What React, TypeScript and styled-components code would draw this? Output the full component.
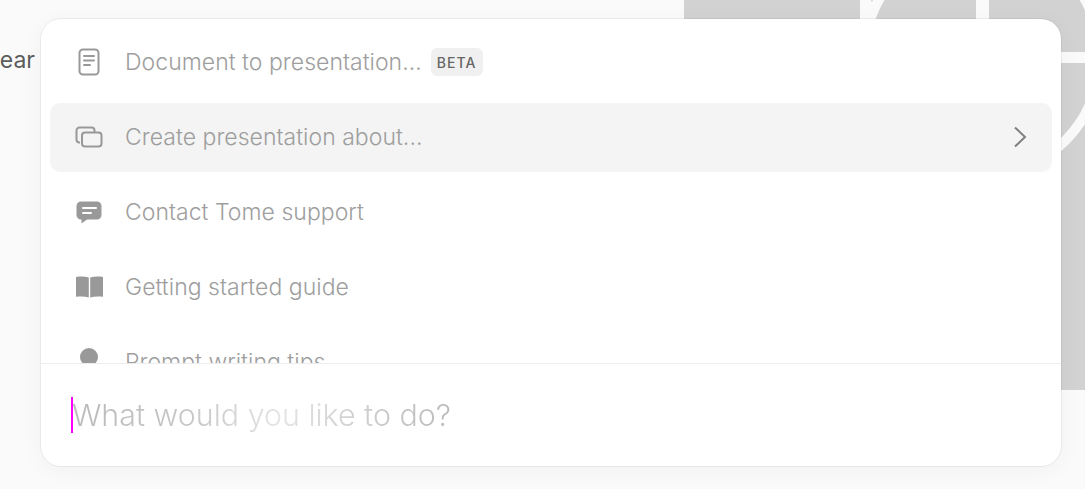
import React from "react";
import styled, { createGlobalStyle } from "styled-components";

const GlobalStyle = createGlobalStyle`
  html, body {
    margin: 0;
    padding: 0;
    height: 100%;
    background: #fafafa;
    overflow: hidden;
  }
  #root {
    height: 100%;
  }
`;

const Page = styled.div`
  width: 1085px;
  height: 489px;
  position: relative;
  overflow: hidden;
  display: flex;
  justify-content: space-between;
  align-items: flex-start;
  font-family: Inter, "Liberation Sans", sans-serif;
`;

const BackText = styled.span`
  margin: 46px 0 0 0;
  font-size: 23px;
  line-height: 28px;
  font-weight: 400;
  color: #5c5c5c;
  width: 35px;
  overflow: hidden;
  direction: rtl;
`;

const Artwork = styled.svg`
  display: block;
  width: 401px;
  height: 390px;
  background: #d2d2d2;
  flex: none;
`;

const Palette = styled.div`
  position: absolute;
  left: 41px;
  top: 19px;
  width: 1020px;
  height: 447px;
  box-sizing: border-box;
  display: flex;
  flex-direction: column;
  background: #fff;
  border-radius: 20px;
  box-shadow: 0 0 0 1px rgba(0, 0, 0, 0.05), 0 4px 24px rgba(0, 0, 0, 0.04);
  overflow: hidden;
`;

const List = styled.div`
  height: 344px;
  flex: none;
  padding: 9px 9px 0;
  box-sizing: border-box;
  display: flex;
  flex-direction: column;
  gap: 6px;
  overflow: hidden;
`;

const Row = styled.div<{ $active?: boolean }>`
  height: 69px;
  flex: none;
  display: flex;
  align-items: center;
  padding: 0 25px 0 24px;
  border-radius: 10px;
  background: ${(p) => (p.$active ? "#f4f4f4" : "transparent")};
`;

const IconSlot = styled.div`
  width: 30px;
  height: 30px;
  flex: none;
  margin: -1px 21px 0 0;
  display: flex;
  align-items: center;
  justify-content: center;
  svg {
    display: block;
  }
`;

const Label = styled.span`
  font-size: 23px;
  line-height: 28px;
  font-weight: 300;
  letter-spacing: 0.03px;
  color: #9e9e9e;
  margin-top: -2px;
`;

const Badge = styled.span`
  margin: -1px 0 0 9px;
  height: 28px;
  padding: 0 6px;
  display: flex;
  align-items: center;
  border-radius: 6px;
  background: #f0f0f0;
  color: #666;
  font-size: 14px;
  font-weight: 500;
  letter-spacing: 1.1px;
`;

const Chevron = styled.svg`
  margin: -2px 0 0 auto;
  display: block;
`;

const Footer = styled.div`
  flex: 1;
  border-top: 1px solid #ededed;
  display: flex;
  align-items: center;
  padding: 0 0 0 30px;
`;

const Caret = styled.span`
  width: 2px;
  height: 36px;
  flex: none;
  background: #f0f;
  margin-right: -1px;
`;

const Prompt = styled.span`
  font-size: 30.4px;
  line-height: 36px;
  font-weight: 300;
  background: linear-gradient(90deg, #bababa 0%, #c6c6c6 30%, #e4e4e4 55%, #c6c6c6 85%, #bcbcbc 100%);
  -webkit-background-clip: text;
  background-clip: text;
  color: transparent;
`;

const DocIcon = () => (
  <svg width="22" height="28" viewBox="0 0 22 28" fill="none" stroke="#999" strokeWidth="2" strokeLinecap="round">
    <rect x="1.5" y="1.5" width="19" height="25" rx="3.5" />
    <path d="M6 8h10M6 12.5h10M6 17h6" />
  </svg>
);

const SlidesIcon = () => (
  <svg width="28" height="22" viewBox="0 0 28 22" fill="none" stroke="#999" strokeWidth="2">
    <path d="M5 16.5H4.5A3 3 0 0 1 1.5 13.500V4.500A3 3 0 0 1 4.500 1.500H16.500A3 3 0 0 1 19.500 4.500V6" />
    <rect x="7" y="6.500" width="19.500" height="14" rx="3" />
  </svg>
);

const ChatIcon = () => (
  <svg width="26" height="23" viewBox="0 0 26 23">
    <path d="M5 0.500H21A4.500 4.500 0 0 1 25.500 5V14A4.500 4.500 0 0 1 21 18.500H11L5.500 22.500V18.500H5A4.500 4.500 0 0 1 0.500 14V5A4.500 4.500 0 0 1 5 0.500Z" fill="#999" />
    <path d="M7 7h13M7 12h8" stroke="#fff" strokeWidth="2" strokeLinecap="round" />
  </svg>
);

const BookIcon = () => (
  <svg width="27" height="22" viewBox="0 0 27 22" fill="#999">
    <path d="M0 1C4.500 0.300 9 0.300 12.800 1.500V21.500C9 20.300 4.500 20.300 0 20.800Z" />
    <path d="M27 1C22.500 0.300 18 0.300 14.200 1.500V21.500C18 20.300 22.500 20.300 27 20.800Z" />
  </svg>
);

const BulbIcon = () => (
  <svg width="18" height="28" viewBox="0 0 18 28" fill="#999">
    <circle cx="9" cy="9" r="9" />
    <rect x="5" y="21" width="8" height="5" rx="1.500" />
  </svg>
);

const App: React.FC = () => {
  return (
    <Page>
      <GlobalStyle />
      <BackText>ear</BackText>
      <Artwork viewBox="684 0 401 390">
        <circle cx="982" cy="57" r="118" fill="none" stroke="#fafafa" strokeWidth="10" />
        <path d="M860 0H871L873 5L876 0H881L871 20H860Z" fill="#fafafa" />
        <path d="M982.500 0V62" stroke="#fafafa" fill="none" strokeWidth="13" />
        <path d="M1040 57.500H1085" stroke="#fafafa" fill="none" strokeWidth="11" />
      </Artwork>
      <Palette>
        <List>
          <Row>
            <IconSlot><DocIcon /></IconSlot>
            <Label>Document to presentation...</Label>
            <Badge>BETA</Badge>
          </Row>
          <Row $active>
            <IconSlot><SlidesIcon /></IconSlot>
            <Label>Create presentation about...</Label>
            <Chevron width="14" height="22" viewBox="0 0 14 22" fill="none" stroke="#808080" strokeWidth="2">
              <path d="M2 1.500L12 11L2 20.500" />
            </Chevron>
          </Row>
          <Row>
            <IconSlot><ChatIcon /></IconSlot>
            <Label>Contact Tome support</Label>
          </Row>
          <Row>
            <IconSlot><BookIcon /></IconSlot>
            <Label>Getting started guide</Label>
          </Row>
          <Row>
            <IconSlot><BulbIcon /></IconSlot>
            <Label>Prompt writing tips</Label>
          </Row>
        </List>
        <Footer>
          <Caret />
          <Prompt>What would you like to do?</Prompt>
        </Footer>
      </Palette>
    </Page>
  );
};

export default App;
